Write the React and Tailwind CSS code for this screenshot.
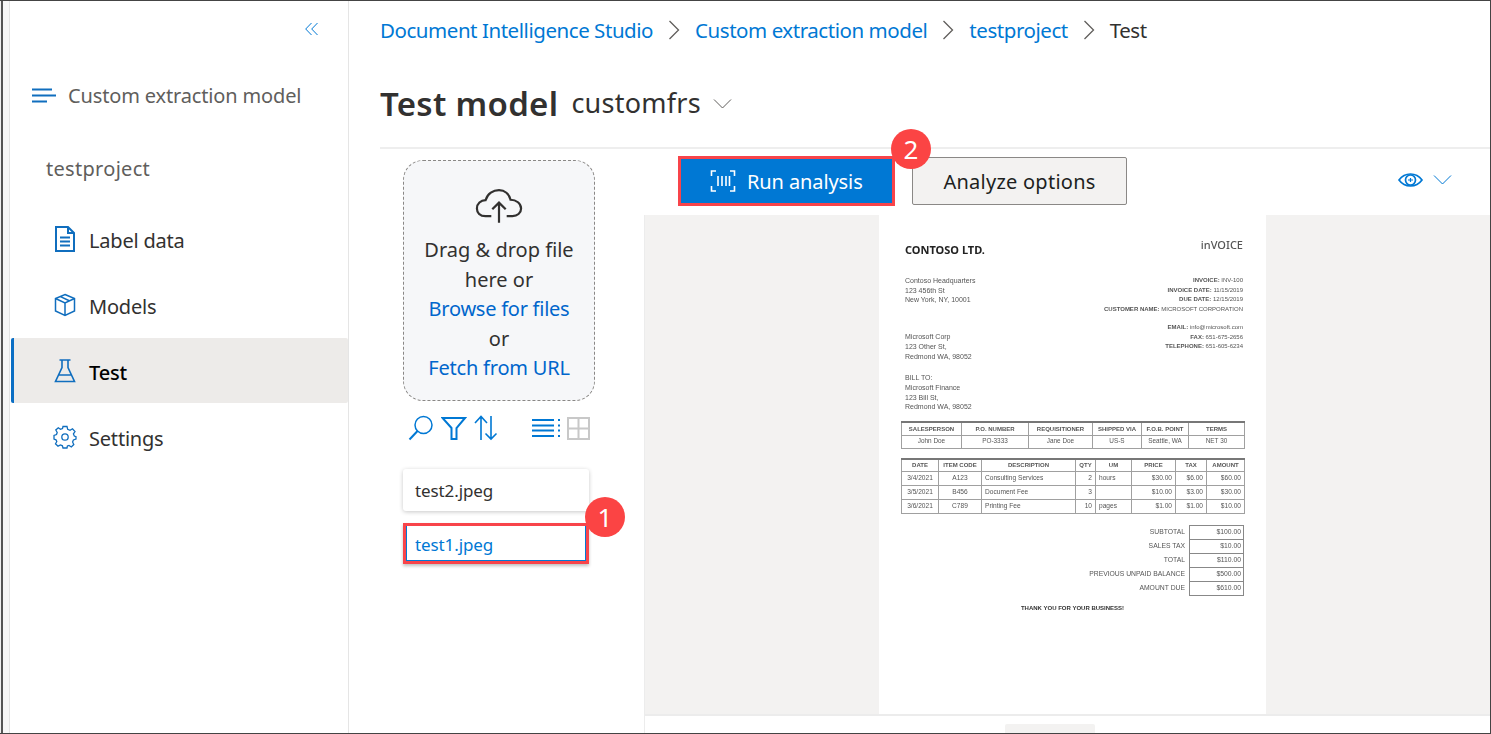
import React from "react";

const font = { fontFamily: '"Noto Sans", "Open Sans", sans-serif' };

function Nav({ icon, label, active }) {
  return (
    <div className={`h-[65px] mb-[1px] flex items-center pl-[39px] rounded-[2px] border-l-[3px] ${active ? "bg-[#edebe9] border-[#0a6ec4] text-black font-medium" : "border-transparent text-[#323130]"}`}>
      <span className="w-[24px] h-[24px] flex items-center justify-center text-[#106ebe]">{icon}</span>
      <span className="ml-[12px] text-[20px] tracking-[-0.2px] pt-[4px]">{label}</span>
    </div>
  );
}

function Badge({ n, className }) {
  return (
    <div className={`absolute w-[40px] h-[40px] rounded-full bg-[#fb4444] text-white text-[26px] flex items-center justify-center leading-none ${className}`}>{n}</div>
  );
}

function Crumb({ label, last }) {
  return (
    <>
      <span className={last ? "text-[#323130]" : "text-[#0078d4]"}>{label}</span>
      {!last && (
        <svg width="12" height="20" viewBox="0 0 12 20" fill="none" stroke="#605e5c" strokeWidth="1.3" className="mx-[15px]"><path d="M1.5 1 L10.5 10 L1.5 19" /></svg>
      )}
    </>
  );
}

function Invoice() {
  const td = "border border-[#a0a0a0] px-[3px] leading-none";
  return (
    <div className="w-[387px] h-[500px] bg-white shrink-0 px-[22px] pt-[25px] text-[#555] text-[7px] leading-[9.7px] blur-[0.35px]" style={{ fontFamily: '"Liberation Sans", sans-serif' }}>
      <div className="flex justify-between items-start pl-[4px] pr-[1px]">
        <span className="text-[11px] font-bold text-[#222] mt-[2px] leading-[16px]" style={font}>CONTOSO LTD.</span>
        <span className="text-[11px] text-[#555] font-medium leading-[16px] -mt-[3px]" style={font}>inVOICE</span>
      </div>
      <div className="flex justify-between pl-[4px] pr-[1px] mt-[18px]">
        <div>
          <div>Contoso Headquarters</div>
          <div>123 456th St</div>
          <div>New York, NY, 10001</div>
          <div className="mt-[27px]">Microsoft Corp</div>
          <div>123 Other St,</div>
          <div>Redmond WA, 98052</div>
          <div className="mt-[12px]">BILL TO:</div>
          <div>Microsoft Finance</div>
          <div>123 Bill St,</div>
          <div>Redmond WA, 98052</div>
        </div>
        <div className="text-right text-[6px]">
          <div><b>INVOICE:</b> INV-100</div>
          <div><b>INVOICE DATE:</b> 11/15/2019</div>
          <div><b>DUE DATE:</b> 12/15/2019</div>
          <div><b>CUSTOMER NAME:</b> MICROSOFT CORPORATION</div>
          <div className="mt-[8px]"><b>EMAIL:</b> info@microsoft.com</div>
          <div><b>FAX:</b> 651-675-2656</div>
          <div><b>TELEPHONE:</b> 651-605-6234</div>
        </div>
      </div>
      <table className="w-[343px] border-collapse text-center text-[6.4px] mt-[9px] border-t-2 border-[#777] table-fixed">
        <colgroup>
          <col className="w-[60px]" /><col className="w-[67px]" /><col className="w-[64px]" /><col className="w-[49px]" /><col className="w-[47px]" /><col className="w-[56px]" />
        </colgroup>
        <tbody>
          <tr className="font-bold text-[6px] h-[13px]">
            {["SALESPERSON", "P.O. NUMBER", "REQUISITIONER", "SHIPPED VIA", "F.O.B. POINT", "TERMS"].map((t, i) => <td key={i} className={`${td} !px-0`}>{t}</td>)}
          </tr>
          <tr className="h-[13px]">
            {["John Doe", "PO-3333", "Jane Doe", "US-S", "Seattle, WA", "NET 30"].map((t, i) => <td key={i} className={td}>{t}</td>)}
          </tr>
        </tbody>
      </table>
      <table className="w-[343px] border-collapse text-[6.6px] mt-[9px] border-t-2 border-[#777] table-fixed">
        <colgroup>
          <col className="w-[37px]" /><col className="w-[43px]" /><col className="w-[94px]" /><col className="w-[20px]" /><col className="w-[36px]" /><col className="w-[44px]" /><col className="w-[31px]" /><col className="w-[38px]" />
        </colgroup>
        <tbody>
          <tr className="font-bold text-[6px] text-center h-[13px]">
            {["DATE", "ITEM CODE", "DESCRIPTION", "QTY", "UM", "PRICE", "TAX", "AMOUNT"].map((t) => <td key={t} className={`${td} !px-0`}>{t}</td>)}
          </tr>
          {[
            ["3/4/2021", "A123", "Consulting Services", "2", "hours", "$30.00", "$6.00", "$60.00"],
            ["3/5/2021", "B456", "Document Fee", "3", "", "$10.00", "$3.00", "$30.00"],
            ["3/6/2021", "C789", "Printing Fee", "10", "pages", "$1.00", "$1.00", "$10.00"],
          ].map((r) => (
            <tr key={r[0]} className="h-[14px]">
              {r.map((t, i) => (
                <td key={i} className={`${td} ${i < 2 ? "text-center" : i === 3 || i > 4 ? "text-right" : "text-left"}`}>{t}</td>
              ))}
            </tr>
          ))}
        </tbody>
      </table>
      <div className="flex justify-end mt-[11px]">
        <table className="border-collapse text-[6.8px]">
          <tbody>
            {[["SUBTOTAL", "$100.00"], ["SALES TAX", "$10.00"], ["TOTAL", "$110.00"], ["PREVIOUS UNPAID BALANCE", "$500.00"], ["AMOUNT DUE", "$610.00"]].map(([a, b]) => (
              <tr key={a} className="h-[14px]">
                <td className="text-right pr-[4px] leading-none">{a}</td>
                <td className="w-[54px] text-right pr-[2px] leading-none border border-[#888]">{b}</td>
              </tr>
            ))}
          </tbody>
        </table>
      </div>
      <div className="text-center font-bold text-[6px] mt-[8px] text-[#333]">THANK YOU FOR YOUR BUSINESS!</div>
    </div>
  );
}

export default function App() {
  return (
    <div className="w-[1491px] h-[734px] bg-white flex overflow-hidden border-t-[1px] border-b-[1px] border-r-[1px] border-[#444] relative" style={font}>
      <div className="w-[3px] bg-[#f0f0f0] border-r-2 border-[#555] shrink-0" />
      <div className="w-[7px] bg-[#f7f7f7] border-r-[1px] border-[#e3e3e3] shrink-0" />
      {/* Sidebar */}
      <div className="w-[339px] shrink-0 border-r border-[#e5e5e5] flex flex-col pl-[1px]">
        <div className="h-[58px] flex justify-end pr-[30px] items-start pt-[21px] text-[#0078d4]">
          <svg width="13" height="14" viewBox="0 0 13 14" fill="none" stroke="currentColor" strokeWidth="1"><path d="M6.5 1 L0.7 7 L6.5 13 M12.5 1 L6.7 7 L12.5 13" /></svg>
        </div>
        <div className="h-[38px] mt-[18px] flex items-center pl-[21px]">
          <svg width="24" height="16" viewBox="0 0 24 16" stroke="#106ebe" strokeWidth="2"><path d="M0 1.5 H20 M0 7.5 H24 M0 13.5 H15" /></svg>
          <span className="ml-[12px] text-[20px] text-[#605e5c] tracking-[-0.15px]">Custom extraction model</span>
        </div>
        <div className="h-[38px] mt-[35px] flex items-center pl-[35px] text-[20px] text-[#605e5c] tracking-[0.3px]">testproject</div>
        <div className="mt-[18px] flex flex-col">
          <Nav label="Label data" icon={
            <svg width="22" height="26" viewBox="0 0 22 26" fill="none" stroke="currentColor" strokeWidth="2"><path d="M2 1 H14 L20 7 V25 H2 Z M14 1 V7 H20" /><path d="M6 11.5 H16 M6 15.5 H16 M6 19.5 H16" strokeWidth="1.8" /></svg>
          } />
          <Nav label="Models" icon={
            <svg width="22" height="24" viewBox="0 0 22 24" fill="none" stroke="currentColor" strokeWidth="1.5"><path d="M11 1.5 L20.5 5.5 V18 L11 22.5 L1.5 18 V5.5 Z M1.5 5.5 L11 10 L20.5 5.5 M11 10 V22.5 M6.5 3.6 L15.8 8" /></svg>
          } />
          <Nav active label="Test" icon={
            <svg width="22" height="24" viewBox="0 0 22 24" fill="none" stroke="currentColor" strokeWidth="1.6"><path d="M5.5 1 H16.5 M8 1 V8.5 L1.5 22.5 H20.5 L14 8.5 V1 M5 16 H17" /></svg>
          } />
          <Nav label="Settings" icon={
            <svg width="24" height="24" viewBox="0 0 24 24" fill="none" stroke="currentColor" strokeWidth="1.3"><circle cx="12" cy="12" r="3.2" /><path d="M10 1.5 H14 L14.7 4.3 L17 5.3 L19.5 3.8 L22 6.5 L20.4 8.9 L21.3 11 L23 11.6 V14 L20.4 14.9 L19.6 17 L20.8 19.5 L18.3 22 L16 20.5 L14.4 21 L14 23 H10 L9.4 20.8 L7.5 20 L5 21.2 L2.5 18.8 L3.8 16.5 L3 14.8 L1 14 V10.5 L3.5 9.5 L4.2 7.5 L2.8 5 L5.3 2.8 L7.5 4.2 L9.5 3.6 Z" /></svg>
          } />
        </div>
      </div>
      {/* Main */}
      <div className="flex-1 min-w-0 flex flex-col">
        <div className="h-[146px] pl-[31px] flex flex-col">
          <div className="h-[59px] flex items-center text-[20.5px] tracking-[-0.45px] pb-[1px]">
            <Crumb label="Document Intelligence Studio" />
            <Crumb label="Custom extraction model" />
            <Crumb label="testproject" />
            <Crumb label="Test" last />
          </div>
          <div className="flex items-center h-[87px] text-[#323130]">
            <span className="text-[33px] font-semibold tracking-[0.3px]">Test model</span>
            <span className="ml-[13px] text-[27px] tracking-[0.25px]">customfrs</span>
            <svg width="20" height="12" viewBox="0 0 20 12" fill="none" stroke="#605e5c" strokeWidth="1" className="ml-[12px]"><path d="M1 1.5 L9.5 10 L18 1.5" /></svg>
          </div>
        </div>
        <div className="flex-1 min-h-0 flex pl-[31px]">
          {/* Files */}
          <div className="w-[264px] shrink-0 border-t-2 border-[#eee] pl-[23px] flex flex-col">
            <div className="mt-[11px] w-[192px] h-[241px] rounded-[20px] border border-dashed border-[#8a8886] bg-[#f6f7f9] flex flex-col items-center text-[20px] leading-[29.5px] text-[#323130]">
              <svg width="48" height="35" viewBox="0 0 50 36" fill="none" stroke="#323130" strokeWidth="2.3" className="mt-[27px]">
                <path d="M17 29 H11 C5 29 2 25.5 2 21 C2 16 6 12.5 11 12.5 C13 5.5 19 2 25 2 C31 2 35.5 6 37 12 C43 12 48 16 48 21 C48 26 44 29 39 29 H33" />
                <path d="M25 36 V15 M18 22 L25 15 L32 22" />
              </svg>
              <div className="mt-[12px]">Drag &amp; drop file</div>
              <div>here or</div>
              <div className="text-[#0066cc] tracking-[-0.25px]">Browse for files</div>
              <div>or</div>
              <div className="text-[#0066cc] tracking-[-0.2px]">Fetch from URL</div>
            </div>
            <div className="flex items-center h-[24px] mt-[15px] text-[#0078d4]">
              <svg width="26" height="26" viewBox="0 0 26 26" fill="none" stroke="currentColor" strokeWidth="2" className="ml-[5px]"><circle cx="15.5" cy="10" r="8.5" strokeWidth="1.5" /><path d="M9.5 16 L1.5 24.5" /></svg>
              <svg width="26" height="24" viewBox="0 0 26 24" fill="none" stroke="currentColor" strokeWidth="2" className="ml-[7px]"><path d="M1.5 2 H24 L15.5 12 V23 H10.5 V12 Z" /></svg>
              <svg width="24" height="26" viewBox="0 0 24 26" fill="none" stroke="currentColor" strokeWidth="1.6" className="ml-[7px]"><path d="M7 25 V2 M1 8 L7 1.5 L13 8 M17 1 V24 M11.5 18.5 L17 24 L22.5 18.5" /></svg>
              <svg width="28" height="20" viewBox="0 0 28 20" fill="none" stroke="currentColor" strokeWidth="2" className="ml-[34px]"><path d="M0 2 H22 M0 7.5 H22 M0 12.5 H22 M0 18 H22" /><path d="M26 2 H28 M26 7.5 H28 M26 12.5 H28 M26 18 H28" /></svg>
              <svg width="23" height="23" viewBox="0 0 23 23" fill="none" stroke="#c8c8c8" strokeWidth="2" className="ml-[7px]"><path d="M1 1 H22 V22 H1 Z M11.5 1 V22 M1 11.5 H22" /></svg>
            </div>
            <div className="mt-[29px] w-[186px] h-[42px] bg-white rounded-[3px] shadow-[0_1px_4px_rgba(0,0,0,0.22)] flex items-center pl-[12px] pt-[2px] text-[17px] tracking-[-0.1px] text-[#323130]">test2.jpeg</div>
            <div className="relative mt-[12px] w-[186px]">
              <div className="h-[41px] border-[3px] border-[#f8444a] shadow-[0_2px_3px_rgba(0,0,0,0.25)] bg-white flex items-center">
                <div className="h-full w-full border border-[#0078d4] border-t-0 flex items-center pl-[8px] pt-[3px] text-[17px] tracking-[-0.1px] text-[#0078d4]">test1.jpeg</div>
              </div>
              <Badge n="1" className="left-[182px] top-[-26px] z-10" />
            </div>
          </div>
          {/* Viewer */}
          <div className="flex-1 min-w-0 flex flex-col">
            <div className="h-[68px] border-t-2 border-[#eee] flex items-start pt-[7px] pl-[34px] pr-[37px]">
              <div className="relative">
                <div className="w-[217px] h-[50px] border-[3px] border-[#f8444a] bg-[#0078d4] flex items-center text-white text-[20px] pl-[29px] tracking-[-0.1px]">
                  <svg width="26" height="22" viewBox="0 0 26 22" fill="none" stroke="currentColor" strokeWidth="1.6"><path d="M6 1 H1.5 V6 M20 1 H24.5 V6 M6 21 H1.5 V16 M20 21 H24.5 V16 M8 6 V16 M12 6 V16 M16 6 V16 M19.5 6 V16" /></svg>
                  <span className="ml-[11px] pt-[2px]">Run analysis</span>
                </div>
                <Badge n="2" className="left-[213px] top-[-27px] z-10" />
              </div>
              <div className="ml-[17px] mt-[1px] w-[215px] h-[48px] bg-[#f3f2f1] border border-[#8a8886] rounded-[2px] flex items-center justify-center pt-[2px] text-[20px] text-[#201f1e] tracking-[0.25px]">Analyze options</div>
              <div className="ml-auto mt-[17px] flex items-center text-[#0078d4]">
                <svg width="25" height="14" viewBox="0 0 25 14" fill="none" stroke="currentColor" strokeWidth="1.7"><path d="M1 7 C5 1.5 9 1 12.5 1 C16 1 20 1.5 24 7 C20 12.5 16 13 12.5 13 C9 13 5 12.5 1 7 Z" /><circle cx="12.5" cy="7" r="5" /><path d="M10 7 H15 M12.5 5 V9" strokeWidth="1.2" /></svg>
                <svg width="20" height="12" viewBox="0 0 20 12" fill="none" stroke="currentColor" strokeWidth="1" className="ml-[10px]"><path d="M1 1.5 L9.5 10 L18 1.5" /></svg>
              </div>
            </div>
            <div className="h-[501px] bg-[#f3f2f1] border-l border-b-2 border-[#ececec] flex pl-[234px] overflow-hidden">
              <Invoice />
            </div>
            <div className="flex-1 border-l border-[#ececec] flex items-end pl-[360px]">
              <div className="w-[90px] h-[9px] bg-[#f3f2f1] rounded-t-[2px]" />
            </div>
          </div>
        </div>
      </div>
    </div>
  );
}
